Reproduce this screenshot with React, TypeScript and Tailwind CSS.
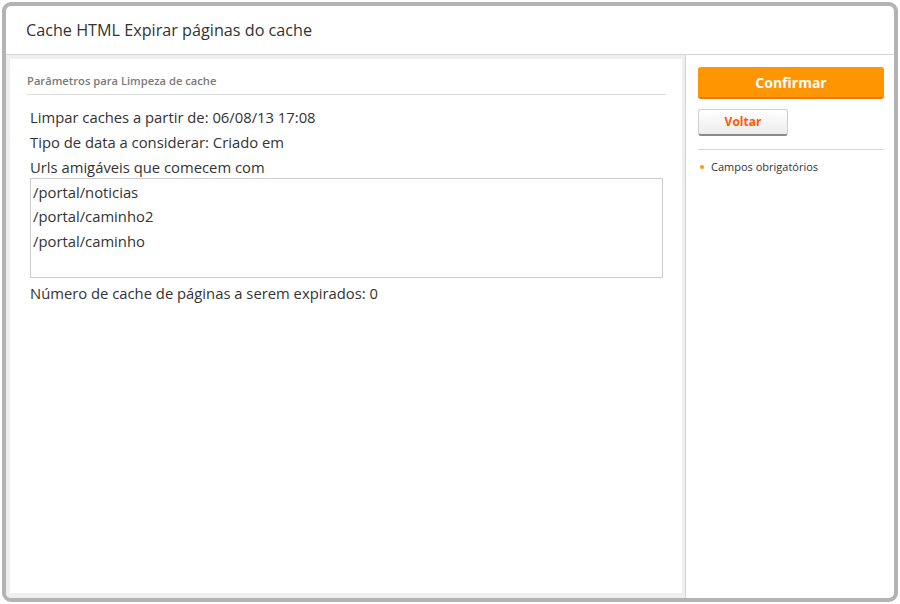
export default function App() {
  const urls = ["/portal/noticias", "/portal/caminho2", "/portal/caminho"];

  return (
    <div className="w-[900px] h-[604px] bg-white p-[2px] font-['Open_Sans',sans-serif] text-[#333]">
      <div className="h-full flex flex-col rounded-[9px] border-[4px] border-[#b3b3b3] overflow-hidden bg-white">
        <div className="h-[49px] shrink-0 border-b border-[#d6d6d6] flex items-center pl-[20px]">
          <h1 className="text-[16.2px] text-[#333]">Cache HTML Expirar páginas do cache</h1>
        </div>

        <div className="flex flex-1 min-h-0">
          <div className="w-[680px] shrink-0 bg-[#efefef] pt-[4px] pl-[4px] pr-[3px] pb-[5px] border-r border-[#d4d4d4]">
            <div className="h-full bg-white pt-[14px] pl-[17px] pr-[16px]">
              <div className="border-b border-[#dcdcdc] pb-[4px]">
                <h2 className="text-[11.2px] font-semibold text-[#7a7a7a]">Parâmetros para Limpeza de cache</h2>
              </div>

              <div className="pl-[3px] pr-[3px] pt-[10px] text-[14.8px] leading-[25px]">
                <p>Limpar caches a partir de: 06/08/13 17:08</p>
                <p>Tipo de data a considerar: Criado em</p>
                <p>Urls amigáveis que comecem com</p>
                <div className="-mt-[2px] h-[100px] border border-[#cdcdcd] pl-[2px] pt-[1px] leading-[24.5px]">
                  {urls.map((u) => (
                    <div key={u}>{u}</div>
                  ))}
                </div>
                <p className="mt-[3px]">Número de cache de páginas a serem expirados: 0</p>
              </div>
            </div>
          </div>

          <div className="flex-1 pt-[12px] pl-[12px] pr-[10px]">
            <button className="w-full h-[32px] rounded-[3px] bg-[#ff9500] border-b-[2px] border-[#f07800] text-white font-bold text-[14px]">
              Confirmar
            </button>
            <button className="mt-[10px] w-[90px] h-[27px] rounded-[3px] border border-[#cfcfcf] border-b-[2px] border-b-[#8a8a8a] bg-gradient-to-b from-white to-[#ececec] text-[#ff5a00] font-bold text-[12px]">
              Voltar
            </button>
            <div className="mt-[13px] border-t border-[#d8d8d8] pt-[9px] flex items-center gap-[7px] pl-[2px]">
              <span className="w-[4px] h-[4px] rounded-full bg-[#ff9a00]"></span>
              <span className="text-[11px] text-[#333]">Campos obrigatórios</span>
            </div>
          </div>
        </div>
      </div>
    </div>
  );
}
